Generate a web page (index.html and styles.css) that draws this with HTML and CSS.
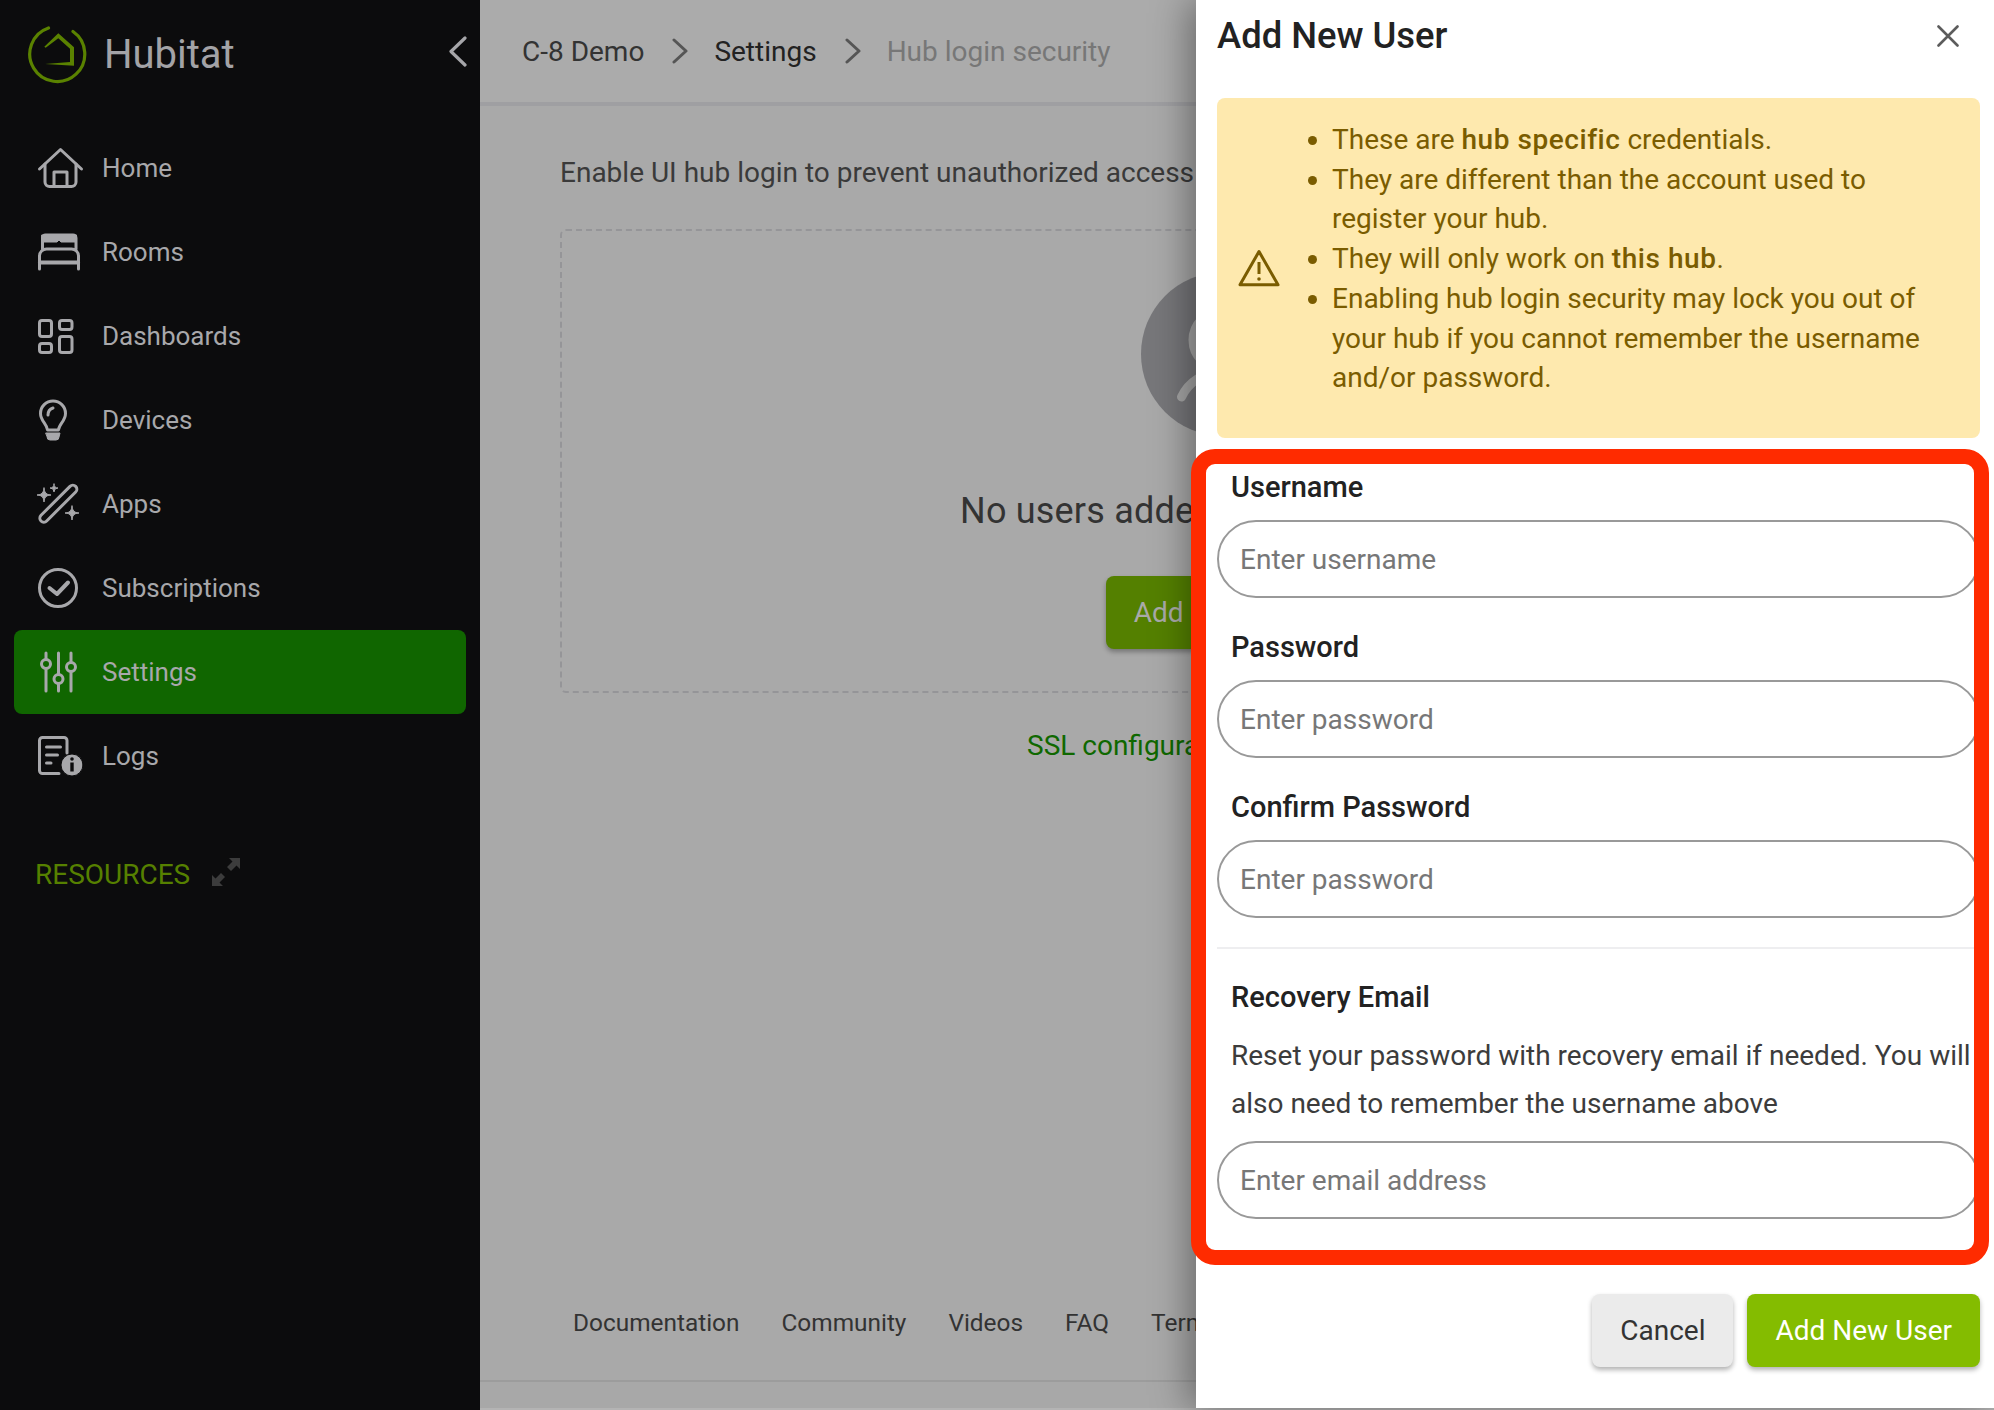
FILE: index.html
```html
<!DOCTYPE html>
<html lang="en">
<head>
<meta charset="utf-8">
<title>Hubitat - Hub login security</title>
<link rel="stylesheet" href="styles.css">
</head>
<body>
<div class="app">
  <aside class="sidebar">
    <div class="brand">
      <svg class="logo" width="64" height="64" viewBox="0 0 64 64" fill="none">
        <path d="M22.500 6 A27.500 27.500 0 1 0 47 9.500" stroke="#5a8200" stroke-width="3.200" stroke-linecap="round"/>
        <path fill="#5a8200" d="M18.300 24.700 L32.300 11.300 L48 25.300 L48 43.700 L19 42 L44 40 L44 26.700 L32.300 16.300 L19.700 25.700 Z"/>
      </svg>
      <span class="brand-name">Hubitat</span>
      <svg class="collapse" width="20" height="32" viewBox="0 0 20 32" fill="none"><path d="M17 3 L3 16.500 L17 30" stroke="#a6a6a9" stroke-width="3.200" stroke-linecap="round" stroke-linejoin="round"/></svg>
    </div>
    <nav class="nav">
      <a class="nav-item">
        <svg class="nav-icon" viewBox="0 0 48 48"><path d="M1.500 25 L22.500 5.500 L43.500 25"/><path d="M7 20 V38 a4.500 4.500 0 0 0 4.500 4.500 H33.500 a4.500 4.500 0 0 0 4.500 -4.500 V20"/><path d="M16 42 V28 H29 V42"/></svg>
        <span>Home</span>
      </a>
      <a class="nav-item">
        <svg class="nav-icon" viewBox="0 0 48 48"><path d="M4.500 21 V10 a3 3 0 0 1 3 -3 H35 a3 3 0 0 1 3 3 V21"/><path class="solid" d="M4 7 H38.500 V14 H23 L21 12 L19 14 H4 Z"/><path d="M1.500 41 V28 a7 7 0 0 1 7 -7 H33.500 a7 7 0 0 1 7 7 V41"/><path class="heavy" d="M2 34.500 H40"/></svg>
        <span>Rooms</span>
      </a>
      <a class="nav-item">
        <svg class="nav-icon" viewBox="0 0 48 48"><rect x="1.500" y="8.500" width="12" height="16" rx="2.500"/><rect x="21.500" y="8.500" width="12.500" height="9" rx="2.500"/><rect x="1.500" y="31.500" width="12" height="9" rx="2.500"/><rect x="21.500" y="24.500" width="12.500" height="16" rx="2.500"/></svg>
        <span>Dashboards</span>
      </a>
      <a class="nav-item">
        <svg class="nav-icon" viewBox="0 0 48 48"><path d="M9.500 34 C9 28 2.500 25 2.500 17.500 A12.500 12.500 0 0 1 27.500 17.500 C27.500 25 21 28 20.500 34 Z"/><path d="M10 19 C10 15 12 13 15 12"/><path class="solid" d="M8 37 H22 L21 41 a3 3 0 0 1 -3 3 H12 a3 3 0 0 1 -3 -3 Z"/></svg>
        <span>Devices</span>
      </a>
      <a class="nav-item">
        <svg class="nav-icon" viewBox="0 0 48 48"><rect x="-4" y="20" width="49" height="8" rx="4" transform="rotate(-45 20 24)"/><path class="solid" d="M6 8 Q6 15 13 15 Q6 15 6 22 Q6 15 -1 15 Q6 15 6 8 Z"/><path class="solid" d="M16 4 Q16 8 20 8 Q16 8 16 12 Q16 8 12 8 Q16 8 16 4 Z"/><path class="solid" d="M34 26 Q34 33 41 33 Q34 33 34 40 Q34 33 27 33 Q34 33 34 26 Z"/></svg>
        <span>Apps</span>
      </a>
      <a class="nav-item">
        <svg class="nav-icon" viewBox="0 0 48 48"><circle cx="20" cy="24" r="18.500"/><path class="heavy" d="M11.500 24 L19 30 L30 18.500"/></svg>
        <span>Subscriptions</span>
      </a>
      <a class="nav-item active">
        <svg class="nav-icon" viewBox="0 0 48 48"><path d="M8 5 V43 M20.500 5 V43 M33 5 V43"/><circle class="knob" cx="8" cy="16" r="4.500"/><circle class="knob" cx="20.500" cy="31" r="4.500"/><circle class="knob" cx="33" cy="19" r="4.500"/></svg>
        <span>Settings</span>
      </a>
      <a class="nav-item">
        <svg class="nav-icon" viewBox="0 0 48 48"><path d="M21 41.500 H4.500 a3 3 0 0 1 -3 -3 V8.500 a3 3 0 0 1 3 -3 H26 a3 3 0 0 1 3 3 V21"/><path d="M8.500 15 H22.500 M8.500 23 H19.500 M8.500 31 H13"/><circle class="badge" cx="34" cy="33" r="11"/><circle class="badge-mark" cx="34" cy="27" r="1.800"/><rect class="badge-mark" x="32.300" y="30.500" width="3.400" height="9"/></svg>
        <span>Logs</span>
      </a>
    </nav>
    <div class="resources">
      <span>RESOURCES</span>
      <svg width="30" height="30" viewBox="0 0 30 30"><path fill="#3c3c3c" d="M18 1 H29 V12 L25.500 8.500 L20 14 L16 10 L21.500 4.500 Z M12 29 H1 V18 L4.500 21.500 L10 16 L14 20 L8.500 25.500 Z"/></svg>
    </div>
  </aside>

  <main class="main">
    <header class="crumbs">
      <span class="crumb">C-8 Demo</span>
      <svg class="crumb-sep" width="16" height="26" viewBox="0 0 16 26" fill="none"><path d="M2 2 L14 13 L2 24"/></svg>
      <span class="crumb crumb-strong">Settings</span>
      <svg class="crumb-sep" width="16" height="26" viewBox="0 0 16 26" fill="none"><path d="M2 2 L14 13 L2 24"/></svg>
      <span class="crumb crumb-muted">Hub login security</span>
    </header>
    <section class="content">
      <p class="intro">Enable UI hub login to prevent unauthorized access</p>
      <div class="empty">
        <svg class="avatar" width="164" height="164" viewBox="0 0 164 164" fill="none">
          <circle cx="82" cy="82" r="82" fill="#77777a"/>
          <circle cx="80.500" cy="68" r="29" stroke="#a6a6a6" stroke-width="8"/>
          <path d="M40.500 125 C48 109 62 101 82 99" stroke="#a6a6a6" stroke-width="9" stroke-linecap="round"/>
        </svg>
        <h2 class="empty-title">No users added</h2>
        <button class="empty-btn">Add New User</button>
      </div>
      <a class="ssl">SSL configuration</a>
    </section>
    <footer class="footer">
      <div class="footer-links"><a>Documentation</a><a>Community</a><a>Videos</a><a>FAQ</a><a>Terms</a></div>
      <div class="footer-strip"></div>
    </footer>
  </main>

  <aside class="drawer">
    <div class="drawer-head">
      <h1>Add New User</h1>
      <svg width="22" height="22" viewBox="0 0 22 22" fill="none"><path d="M1.500 1.500 L20.500 20.500 M20.500 1.500 L1.500 20.500" stroke="#5c5c5c" stroke-width="2.600" stroke-linecap="round"/></svg>
    </div>
    <div class="alert">
      <svg class="alert-icon" width="42" height="38" viewBox="0 0 42 38" fill="none"><path d="M21 2.500 L40 35.800 H2 Z" stroke="#7a5c00" stroke-width="3" stroke-linejoin="round"/><path d="M21 13 V25" stroke="#7a5c00" stroke-width="3"/><circle cx="21" cy="30" r="1.800" fill="#7a5c00"/></svg>
      <ul>
        <li>These are <b>hub specific</b> credentials.</li>
        <li>They are different than the account used to register your hub.</li>
        <li>They will only work on <b>this hub</b>.</li>
        <li>Enabling hub login security may lock you out of your hub if you cannot remember the username and/or password.</li>
      </ul>
    </div>
    <form class="form">
      <div class="field">
        <label for="u">Username</label>
        <input id="u" type="text" placeholder="Enter username">
      </div>
      <div class="field">
        <label for="p">Password</label>
        <input id="p" type="password" placeholder="Enter password">
      </div>
      <div class="field">
        <label for="c">Confirm Password</label>
        <input id="c" type="password" placeholder="Enter password">
      </div>
      <hr class="divider">
      <div class="field">
        <label for="e">Recovery Email</label>
        <p class="hint">Reset your password with recovery email if needed. You will also need to remember the username above</p>
        <input id="e" type="email" placeholder="Enter email address">
      </div>
    </form>
    <div class="actions">
      <button class="btn btn-cancel" type="button">Cancel</button>
      <button class="btn btn-primary" type="button">Add New User</button>
    </div>
    <div class="highlight"></div>
  </aside>
</div>
</body>
</html>
```
FILE: styles.css
```css
* { box-sizing: border-box; }
html, body { margin: 0; height: 100%; }
body { font-family: Roboto, "Liberation Sans", sans-serif; overflow: hidden; background: #a9a9a9; }
.app { position: relative; display: flex; width: 1994px; height: 1410px; overflow: hidden; }

/* sidebar */
.sidebar { width: 480px; flex: none; background: #0c0c0d; color: #a8a8ab; }
.brand { display: flex; align-items: center; height: 126px; padding: 0 12px 18px 26px; }
.logo { flex: none; }
.brand-name { margin-left: 14px; font-size: 40px; color: #a3a3a6; flex: 1; }
.collapse { margin-top: -6px; }
.nav { display: flex; flex-direction: column; }
.nav-item { display: flex; align-items: center; height: 84px; margin: 0 14px; padding-left: 24px; font-size: 26px; border-radius: 8px; }
.nav-item.active { background: #106600; }
.nav-icon { width: 48px; height: 48px; flex: none; margin-right: 16px; overflow: visible; fill: none; stroke: #a8a8ab; stroke-width: 3; stroke-linecap: round; stroke-linejoin: round; }
.nav-icon .solid { fill: #a8a8ab; stroke-width: 1; }
.nav-icon .heavy { stroke-width: 4; }
.nav-icon .knob { fill: #106600; }
.nav-icon .badge { fill: #a8a8ab; stroke: #0c0c0d; stroke-width: 1; }
.nav-icon .badge-mark { fill: #0c0c0d; stroke: none; }
.resources { display: flex; align-items: center; gap: 21px; margin: 56px 0 0 35px; height: 40px; font-size: 28px; color: #568000; }
.resources svg { margin-top: -4px; }

/* main */
.main { flex: 1; display: flex; flex-direction: column; min-width: 0; color: #333; }
.crumbs { display: flex; align-items: center; height: 106px; padding: 0 0 0 42px; border-bottom: 4px solid #9f9fa2; background: #ababab; font-size: 28px; }
.crumb-strong { color: #222; }
.crumb-muted { color: #777; }
.crumb-sep { margin: 0 26px 0 28px; }
.crumb-sep path { stroke: #555; stroke-width: 3; stroke-linecap: round; stroke-linejoin: round; }
.content { flex: 1; padding: 47px 111px 0 80px; background: #a9a9a9; }
.intro { margin: 0; font-size: 28px; line-height: 40px; white-space: nowrap; color: #3a3a3a; }
.empty { display: flex; flex-direction: column; height: 464px; margin-top: 36px; padding-top: 41px; border: 2px dashed #959598; border-radius: 6px; }
.avatar { margin-left: 579px; flex: none; }
.empty-title { margin: 53px 0 0 398px; font-size: 36px; line-height: 44px; font-weight: 400; letter-spacing: .2px; color: #333; white-space: nowrap; }
.empty-btn { width: 232px; height: 73px; margin: 43px 0 0 544px; border: 0; border-radius: 8px; padding: 0; background: #548000; color: #a9a9a9; font: 400 28px Roboto, sans-serif; box-shadow: 0 3px 5px rgba(0, 0, 0, .3); }
.ssl { display: block; margin: 36px 0 0 467px; font-size: 28px; color: #0f6800; white-space: nowrap; }
.footer-links { display: flex; gap: 42px; padding: 0 0 43px 93px; font-size: 24.400px; line-height: 29px; color: #333; }
.footer-strip { height: 30px; border-top: 2px solid #9c9c9c; border-bottom: 2px solid #b4b4b4; background: #a8a8a8; }

/* drawer */
.drawer { position: absolute; top: 0; right: 0; bottom: 2px; width: 798px; padding: 0 14px 0 21px; background: #fff; box-shadow: -6px 0 36px rgba(0, 0, 0, .4); }
.drawer-head { display: flex; align-items: center; justify-content: space-between; height: 71px; padding-right: 21px; margin-bottom: 27px; }
.drawer-head h1 { margin: 0; font-size: 36.400px; font-weight: 500; color: #222; }
.alert { display: flex; align-items: center; height: 340px; padding-left: 21px; border-radius: 8px; background: #fee9ae; color: #7a5c00; font-size: 28px; line-height: 39.700px; }
.alert-icon { flex: none; }
.alert ul { margin: 0 0 18px; padding: 0 26px 0 52px; }
.alert b { font-weight: 500; letter-spacing: .55px; }
.form { display: flex; flex-direction: column; gap: 34px; margin-top: 34px; }
.field { display: flex; flex-direction: column; }
.field label { height: 30px; margin: 0 0 18px 14px; font-size: 29px; line-height: 30px; font-weight: 500; color: #222; }
.field input { width: 100%; height: 78px; padding: 0 21px; border: 2px solid #999; border-radius: 39px; outline: 0; background: #fff; font: 400 28px Roboto, sans-serif; color: #333; }
.field input::placeholder { color: #777; opacity: 1; }
.divider { width: 100%; height: 2px; margin: -5px 0 -1px; border: 0; background: #eeeef0; }
.hint { margin: 2px 0 13px 14px; font-size: 28px; line-height: 48px; color: #3c3c3c; }
.actions { display: flex; justify-content: flex-end; gap: 14px; margin-top: 75px; }
.btn { height: 73px; padding: 0 28px; border: 0; border-radius: 8px; font: 400 28px Roboto, sans-serif; box-shadow: 0 3px 5px rgba(0, 0, 0, .3); }
.btn-cancel { background: #ebebeb; color: #333; }
.btn-primary { background: #84bc00; color: #fff; }
.highlight { position: absolute; left: -5px; top: 449px; width: 798px; height: 816px; border: 15px solid #ff2b00; border-radius: 24px; pointer-events: none; }
```
